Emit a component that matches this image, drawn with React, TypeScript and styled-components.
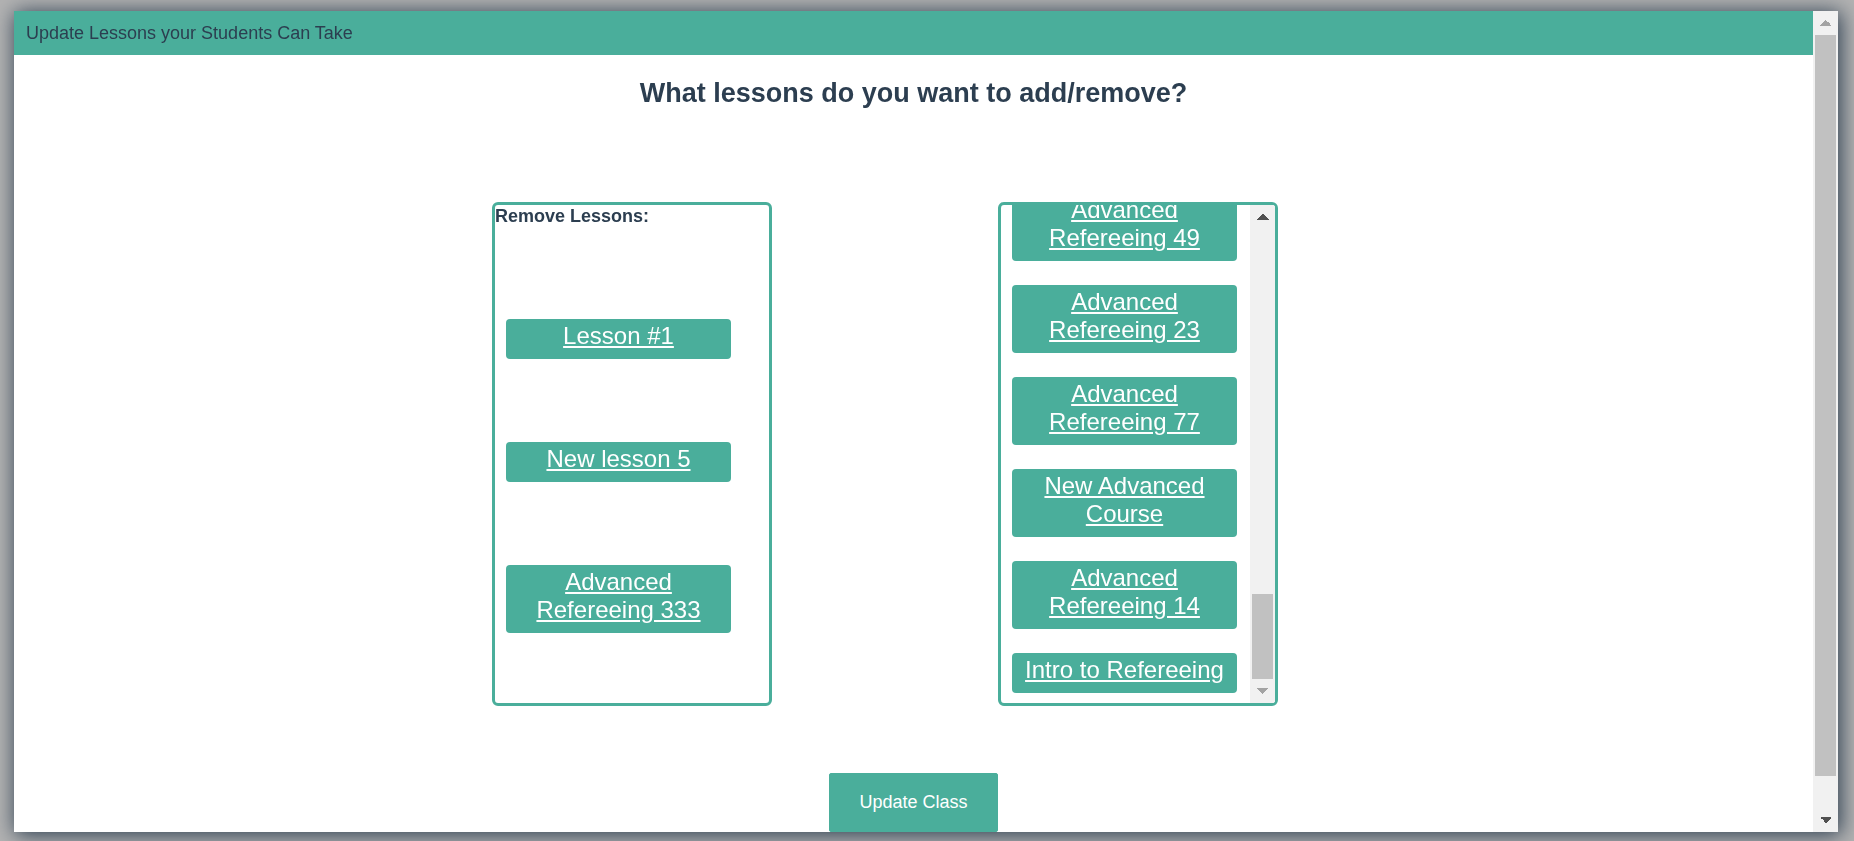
import { useLayoutEffect, useRef } from 'react';
import styled, { createGlobalStyle, css } from 'styled-components';

const TEAL = '#4aae9b';
const INK = '#2c3e50';
const TRACK = '#f1f1f1';

const GlobalStyle = createGlobalStyle`
  html, body {
    margin: 0;
    height: 100%;
  }
  body {
    font-family: 'Liberation Sans', Arial, sans-serif;
    color: ${INK};
    background: #fff;
  }
`;

// triangle made of two right-angled halves
const arrow = (dir: 'up' | 'down', color: string) => css`
  background-color: ${TRACK};
  background-repeat: no-repeat;
  background-size: 6px 6px;
  background-position: calc(50% - 3px) 50%, calc(50% + 3px) 50%;
  background-image: ${dir === 'up'
    ? `linear-gradient(to bottom right, transparent 50%, ${color} 50%), linear-gradient(to bottom left, transparent 50%, ${color} 50%)`
    : `linear-gradient(to top right, transparent 50%, ${color} 50%), linear-gradient(to top left, transparent 50%, ${color} 50%)`};
`;

const ScrollTrack = styled.div`
  flex: 0 0 25px;
  display: flex;
  flex-direction: column;
  background: ${TRACK};
`;

const ScrollArrow = styled.div<{ $dir: 'up' | 'down'; $enabled?: boolean }>`
  flex: 0 0 24px;
  ${({ $dir, $enabled }) => arrow($dir, $enabled ? '#505050' : '#a3a3a3')};
`;

const ThumbRail = styled.div`
  flex: 1;
  display: flex;
  flex-direction: column;
`;

const RailGap = styled.div<{ $grow: number }>`
  flex: ${({ $grow }) => $grow} 1 0;
`;

const Thumb = styled.div<{ $grow: number }>`
  flex: ${({ $grow }) => $grow} 1 0;
  margin: 0 2px;
  background: #c1c1c1;
`;

type ScrollbarProps = { start: number; size: number; canUp?: boolean; canDown?: boolean };

const Scrollbar = ({ start, size, canUp, canDown }: ScrollbarProps) => (
  <ScrollTrack>
    <ScrollArrow $dir="up" $enabled={canUp} />
    <ThumbRail>
      <RailGap $grow={start} />
      <Thumb $grow={size} />
      <RailGap $grow={1 - start - size} />
    </ThumbRail>
    <ScrollArrow $dir="down" $enabled={canDown} />
  </ScrollTrack>
);

const Backdrop = styled.div`
  position: fixed;
  inset: 0;
  box-sizing: border-box;
  padding: 11px 16px 9px 14px;
  background: rgba(0, 0, 0, 0.3);
`;

const Modal = styled.section`
  height: 100%;
  display: flex;
  overflow: hidden;
  background: #fff;
  box-shadow: 2px 2px 20px 1px ${INK};
`;

const ModalContent = styled.div`
  flex: 1;
  min-width: 0;
  overflow: hidden;
`;

const Header = styled.header`
  height: 44px;
  display: flex;
  align-items: center;
  padding: 0 12px;
  background: ${TEAL};
  font-size: 18px;
  white-space: nowrap;
`;

const Heading = styled.h2`
  margin: 0;
  padding-top: 22px;
  text-align: center;
  font-size: 27px;
  line-height: 32px;
  font-weight: bold;
`;

const Columns = styled.div`
  display: flex;
  justify-content: center;
  gap: 226px;
  margin-top: 93px;
  padding-right: 57px;
`;

const LessonBox = styled.div`
  width: 280px;
  height: 504px;
  box-sizing: border-box;
  display: flex;
  border: 3px solid ${TEAL};
  border-radius: 6px;
  overflow: hidden;
`;

const ListViewport = styled.div`
  flex: 1;
  min-width: 0;
  overflow: hidden;
`;

const BoxTitle = styled.div`
  padding-top: 1px;
  font-size: 18px;
  line-height: 21px;
  font-weight: bold;
`;

const ButtonList = styled.div<{ $spread?: boolean }>`
  display: flex;
  flex-direction: column;
  gap: ${({ $spread }) => ($spread ? '83px' : '24px')};
  padding: ${({ $spread }) => ($spread ? '92px 0 0' : '23px 0 10px')};
`;

const LessonButton = styled.a`
  display: block;
  width: 225px;
  box-sizing: border-box;
  margin-left: 11px;
  padding: 3px 4px 9px;
  background: ${TEAL};
  border-radius: 4px;
  color: #fff;
  font-size: 24px;
  line-height: 28px;
  text-align: center;
  text-decoration: underline;
  text-underline-offset: 2px;
`;

const Footer = styled.footer`
  display: flex;
  justify-content: center;
  padding: 67px 0 37px;
`;

const UpdateButton = styled.button`
  padding: 18px 29px;
  border: 1px solid ${TEAL};
  border-radius: 2px;
  background: ${TEAL};
  color: #fff;
  font-family: 'Liberation Sans', Arial, sans-serif;
  font-size: 18px;
  line-height: 21px;
`;

const current = ['Lesson #1', 'New lesson 5', 'Advanced Refereeing 333'];

const available = [
  'Lesson #2',
  'Lesson #3',
  'Lesson #4',
  'New lesson 2',
  'New lesson 3',
  'Advanced Refereeing 2',
  'Advanced Refereeing 5',
  'Advanced Refereeing 8',
  'Advanced Refereeing 11',
  'Advanced Refereeing 12',
  'Advanced Refereeing 19',
  'Advanced Refereeing 21',
  'Advanced Refereeing 27',
  'Advanced Refereeing 30',
  'Advanced Refereeing 33',
  'Advanced Refereeing 38',
  'Advanced Refereeing 41',
  'Advanced Refereeing 45',
  'Advanced Refereeing 52',
  'Advanced Refereeing 60',
  'Advanced Refereeing 64',
  'Advanced Refereeing 88',
  'Advanced Refereeing 91',
  'Advanced Refereeing 99',
  'Advanced Refereeing 49',
  'Advanced Refereeing 23',
  'Advanced Refereeing 77',
  'New Advanced Course',
  'Advanced Refereeing 14',
  'Intro to Refereeing',
];

export default function App() {
  const listRef = useRef<HTMLDivElement>(null);

  // the add list is shown scrolled to its end
  useLayoutEffect(() => {
    const el = listRef.current;
    if (el) el.scrollTop = el.scrollHeight;
  }, []);

  return (
    <>
      <GlobalStyle />
      <Backdrop>
        <Modal>
          <ModalContent>
            <Header>Update Lessons your Students Can Take</Header>
            <Heading>What lessons do you want to add/remove?</Heading>
            <Columns>
              <LessonBox>
                <ListViewport>
                  <BoxTitle>Remove Lessons:</BoxTitle>
                  <ButtonList $spread>
                    {current.map(name => (
                      <LessonButton key={name} href="#">
                        {name}
                      </LessonButton>
                    ))}
                  </ButtonList>
                </ListViewport>
              </LessonBox>
              <LessonBox>
                <ListViewport ref={listRef}>
                  <BoxTitle>Add Lessons:</BoxTitle>
                  <ButtonList>
                    {available.map(name => (
                      <LessonButton key={name} href="#">
                        {name}
                      </LessonButton>
                    ))}
                  </ButtonList>
                </ListViewport>
                <Scrollbar start={0.811} size={0.189} canUp />
              </LessonBox>
            </Columns>
            <Footer>
              <UpdateButton>Update Class</UpdateButton>
            </Footer>
          </ModalContent>
          <Scrollbar start={0} size={0.958} canDown />
        </Modal>
      </Backdrop>
    </>
  );
}
